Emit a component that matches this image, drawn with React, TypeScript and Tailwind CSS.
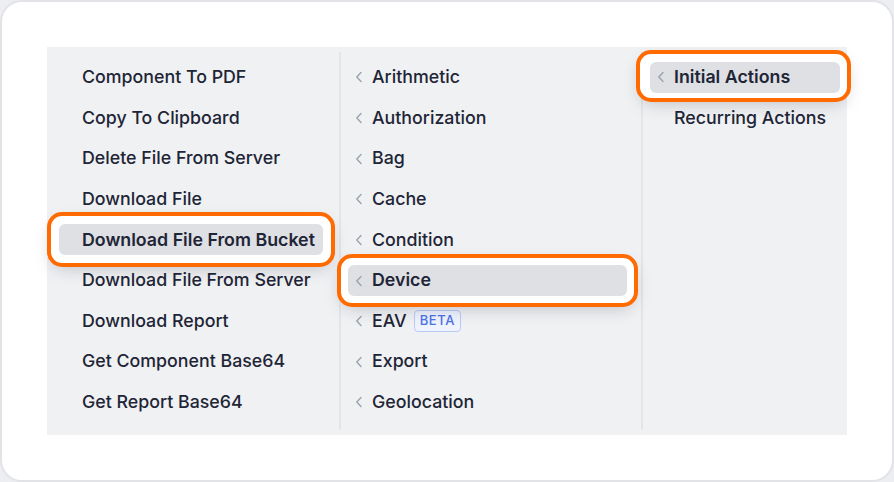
import type { ReactNode } from "react";

type Entry = { label: string; selected?: boolean; badge?: string };

const ACTIONS: Entry[] = [
  { label: "Component To PDF" },
  { label: "Copy To Clipboard" },
  { label: "Delete File From Server" },
  { label: "Download File" },
  { label: "Download File From Bucket", selected: true },
  { label: "Download File From Server" },
  { label: "Download Report" },
  { label: "Get Component Base64" },
  { label: "Get Report Base64" },
];

const GROUPS: Entry[] = [
  { label: "Arithmetic" },
  { label: "Authorization" },
  { label: "Bag" },
  { label: "Cache" },
  { label: "Condition" },
  { label: "Device", selected: true },
  { label: "EAV", badge: "BETA" },
  { label: "Export" },
  { label: "Geolocation" },
];

function Chevron() {
  return (
    <svg width="8" height="12" viewBox="0 0 8 12" fill="none" className="shrink-0">
      <path d="M6 1.5 L1.8 6 L6 10.5" stroke="#9ca3af" strokeWidth="1.4" strokeLinecap="round" strokeLinejoin="round" />
    </svg>
  );
}

function Focus({ children, ring }: { children: ReactNode; ring: string }) {
  return (
    <div className="relative">
      <div
        className={`absolute rounded-[15px] border-[4px] border-[#ff6b00] bg-white shadow-[0_6px_18px_-6px_rgba(15,23,42,0.25)] ${ring}`}
      />
      <div className="relative">{children}</div>
    </div>
  );
}

function Row({ entry, chevron, indent, ring }: { entry: Entry; chevron?: boolean; indent?: boolean; ring: string }) {
  const box = (
    <div
      className={`flex h-[31px] items-center rounded-[6px] ${
        entry.selected ? "bg-[#dfe0e4] font-semibold" : ""
      } ${chevron || indent ? "pl-[7px]" : "pl-[23px]"}`}
    >
      {chevron && <Chevron />}
      {indent && <span className="w-[8px] shrink-0" />}
      <span className={chevron || indent ? "ml-[9px]" : ""}>{entry.label}</span>
      {entry.badge && (
        <span className="ml-[7px] flex h-[22px] items-center rounded-[4px] border border-[#b9caf6] bg-[#eef3fe] px-[5px] text-[13px] font-medium tracking-[0.05em] text-[#4d72e6]">
          {entry.badge}
        </span>
      )}
    </div>
  );
  return (
    <div className="flex h-[40.65px] items-center">
      <div className="w-full">{entry.selected ? <Focus ring={ring}>{box}</Focus> : box}</div>
    </div>
  );
}

export default function App() {
  return (
    <div
      className="h-[482px] w-[894px] bg-[#eceef1] text-[17.8px] font-medium text-[#1e2536]"
      style={{ fontFamily: "Inter, 'Noto Sans', sans-serif" }}
    >
      <div className="h-full rounded-[22px] border-2 border-[#e1e3e7] bg-white px-[45px] pt-[45px]">
        <div className="flex h-[388px] w-[800px] bg-[#f0f1f3]">
          <div className="w-[292px] pl-[12px] pr-[16px] pt-[10px]">
            {ACTIONS.map((entry) => (
              <Row key={entry.label} entry={entry} ring="-inset-x-[12px] -inset-y-[12px]" />
            ))}
          </div>
          <div className="my-[5px] w-[2px] bg-[#e3e5e8]" />
          <div className="w-[300px] pl-[7px] pr-[14px] pt-[10px]">
            {GROUPS.map((entry) => (
              <Row key={entry.label} entry={entry} chevron ring="-inset-x-[11px] -inset-y-[11px]" />
            ))}
          </div>
          <div className="my-[5px] w-[2px] bg-[#e3e5e8]" />
          <div className="w-[204px] pl-[7px] pr-[7px] pt-[10px]">
            <Row entry={{ label: "Initial Actions", selected: true }} chevron ring="-left-[14px] -right-[11px] -top-[12px] -bottom-[9px]" />
            <Row entry={{ label: "Recurring Actions" }} indent ring="" />
          </div>
        </div>
      </div>
    </div>
  );
}
